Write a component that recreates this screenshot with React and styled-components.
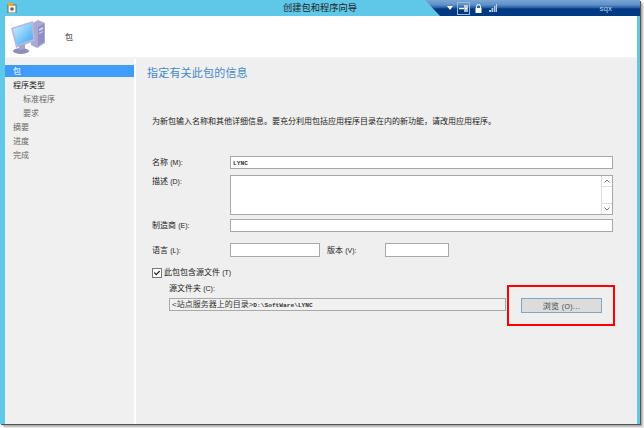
import React from "react"
import styled, { createGlobalStyle } from "styled-components"
import { FaCheck } from "react-icons/fa"

const Global = createGlobalStyle`
  html, body {
    margin: 0;
    padding: 0;
    background: #fff;
  }
  body {
    width: 644px;
    height: 428px;
    overflow: hidden;
    font-family: "Liberation Sans", "Noto Sans CJK SC", sans-serif;
    font-size: 8px;
    color: #444;
  }
`

const Frame = styled.div`
  width: 640px;
  height: 424px;
  display: flex;
  flex-direction: column;
  background: #5fc8e8;
  box-shadow: 1px 1px 0 #555, 3px 3px 2px #aaa;
`

const TitleBar = styled.div`
  height: 16px;
  flex: none;
  display: grid;
  grid-template-columns: 1fr auto 1fr;
  align-items: center;
`

const Title = styled.div`
  font-size: 9.25px;
  color: #222;
  line-height: 16px;
`

const AppIcon = styled.svg`
  width: 10px;
  height: 10px;
  display: block;
  margin-left: 7px;
`

const UserPanel = styled.div`
  justify-self: end;
  align-self: start;
  width: 215px;
  height: 16px;
  display: flex;
  align-items: center;
  padding: 0 28px 0 22px;
  box-sizing: border-box;
  background: linear-gradient(#7aa6d6 0, #5f90c8 30%, #2a5da3 48%, #003a84 55%, #003a84 100%);
  clip-path: polygon(0 0, 100% 0, 100% 100%, 15px 100%);
  color: #c0d4ea;
`

const Pin = styled.div`
  width: 11px;
  height: 11px;
  margin: 0 5px 0 4px;
  border: 1px solid #9db9d8;
  display: flex;
  align-items: center;
  justify-content: center;
`

const TrayIcon = styled.svg`
  display: block;
  flex: none;
  margin-left: ${(p) => p.$gap || 0}px;
`

const UserName = styled.span`
  margin-left: auto;
  font-size: 8px;
`

const Body = styled.div`
  flex: 1;
  display: flex;
  flex-direction: column;
  margin: 0 3px 0 5px;
  min-height: 0;
`

const Banner = styled.div`
  height: 41px;
  flex: none;
  background: #fff;
  display: flex;
  align-items: center;
  border-bottom: 2px solid #f3f3f3;
`

const BannerIcon = styled.svg`
  width: 36px;
  height: 36px;
  margin-left: 5px;
  flex: none;
`

const BannerText = styled.span`
  margin-left: 19px;
  font-size: 8px;
  color: #333;
`

const Main = styled.div`
  flex: 1;
  display: flex;
  min-height: 0;
`

const Sidebar = styled.nav`
  width: 129px;
  flex: none;
  background: #f0f0f0;
  padding-top: 6px;
  border-right: 2px solid #fff;
`

const NavItem = styled.div`
  line-height: 13px;
  font-size: 8px;
  padding-left: ${(p) => (p.$sub ? 18 : 8)}px;
  color: ${(p) => (p.$active ? "#fff" : p.$sub || p.$dim ? "#666" : "#222")};
  background: ${(p) => (p.$active ? "#3f9cf8" : "transparent")};
  height: ${(p) => (p.$active ? 12 : 14)}px;
  margin-bottom: ${(p) => (p.$active ? 2 : 0)}px;
`

const Content = styled.div`
  flex: 1;
  background: #efefef;
  padding: 7px 24px 0 11px;
  position: relative;
`

const Heading = styled.h1`
  margin: 0;
  font-size: 11px;
  font-weight: normal;
  line-height: 14px;
  color: #4488cc;
  letter-spacing: 0.2px;
`

const Intro = styled.p`
  margin: 36px 0 0 5px;
  font-size: 8px;
  line-height: 12px;
  color: #222;
`

const Form = styled.div`
  margin: 28px 0 0 5px;
  display: grid;
  grid-template-columns: 78px 1fr;
  row-gap: 4px;
`

const Label = styled.label`
  font-size: 8px;
  line-height: 13px;
  color: #222;
  white-space: nowrap;
`

// the access key in a label, smaller than the CJK text around it
const Key = styled.span`
  font-size: 7px;
`

const Field = styled.div`
  height: ${(p) => p.$h || 13}px;
  width: ${(p) => (p.$w ? `${p.$w}px` : "auto")};
  margin-bottom: ${(p) => p.$after || 0}px;
  box-sizing: border-box;
  background: ${(p) => (p.$muted ? "#f1f1f1" : "#fff")};
  border: 1px solid #a8a8a8;
  font-size: 8px;
  line-height: 11px;
  padding-left: 2px;
  color: #333;
  white-space: nowrap;
  overflow: hidden;
`

const Mono = styled.span`
  font-family: "Liberation Mono", monospace;
  font-size: 6.2px;
  font-weight: bold;
`

const TextArea = styled(Field)`
  display: flex;
  justify-content: flex-end;
  padding: 0;
`

const ScrollBar = styled.div`
  width: 10px;
  border-left: 1px solid #ddd;
  display: flex;
  flex-direction: column;
  justify-content: space-between;
  align-items: center;
`

const ScrollBtn = styled.div`
  width: 100%;
  height: 10px;
  display: flex;
  align-items: center;
  justify-content: center;
  border-bottom: ${(p) => (p.$down ? "none" : "1px solid #ddd")};
  border-top: ${(p) => (p.$down ? "1px solid #ddd" : "none")};
`

const LangRow = styled.div`
  display: flex;
  align-items: center;
  margin: 11px 0 0 5px;
`

const LangLabel = styled(Label)`
  width: 78px;
`

const VersionLabel = styled(Label)`
  margin-left: 7px;
  width: 58px;
`

const CheckRow = styled.div`
  display: flex;
  align-items: center;
  margin: 9px 0 0 5px;
  height: 13px;
`

const CheckBox = styled.div`
  width: 8px;
  height: 8px;
  margin-right: 2px;
  border: 1px solid #777;
  background: #fff;
  display: flex;
  align-items: center;
  justify-content: center;
  color: #222;
`

const SourceLabel = styled(Label)`
  display: block;
  margin: 3px 0 0 22px;
`

const SourceRow = styled.div`
  display: flex;
  align-items: flex-start;
  margin: 3px 0 0 22px;
`

const PathField = styled(Field)`
  flex: none;
`

const Browse = styled.button`
  margin-left: 15px;
  width: 81px;
  height: 15px;
  padding: 0;
  box-sizing: border-box;
  background: #dcdcdc;
  border: 1px solid #7fa6c4;
  font-family: inherit;
  font-size: 8px;
  color: #444;
  letter-spacing: 0.3px;
`

const Callout = styled.div`
  position: absolute;
  left: 371px;
  top: 226px;
  width: 108px;
  height: 41px;
  box-sizing: border-box;
  border: 2px solid #f00;
  pointer-events: none;
`

const steps = [
  { label: "包", active: true },
  { label: "程序类型" },
  { label: "标准程序", sub: true },
  { label: "要求", sub: true },
  { label: "摘要", dim: true },
  { label: "进度", dim: true },
  { label: "完成", dim: true },
]

const Computer = () => (
  <BannerIcon viewBox="0 0 36 36">
    <defs>
      <linearGradient id="screen" x1="0" y1="0" x2="1" y2="1">
        <stop offset="0" stopColor="#d4f2fe" />
        <stop offset="1" stopColor="#36a6f4" />
      </linearGradient>
    </defs>
    <path d="M21 5 L28 1 L35 4 V24 L27 29 L21 26 Z" fill="#a9a9d4" />
    <path d="M28 8 L34 5 V23 L28 27 Z" fill="#8f8fc4" />
    <path d="M29 10 L33 8 V10 L29 12 Z M29 14 L33 12 V13 L29 15 Z" fill="#d6d6ee" />
    <path d="M1 9 L23 2 L25 22 L6 29 Z" fill="#b5b9dc" />
    <path d="M3 10 L22 4 L23 20 L7 26 Z" fill="url(#screen)" />
    <ellipse cx="11" cy="32" rx="8" ry="3" fill="#8d8fba" />
    <path d="M9 27 L15 25 L15 30 L9 31 Z" fill="#a3a5cc" />
  </BannerIcon>
)

export default function App() {
  return (
    <>
      <Global />
      <Frame>
        <TitleBar>
          <AppIcon viewBox="0 0 10 10">
            <rect x="1" y="2" width="8" height="8" fill="#f7f3e3" stroke="#555" strokeWidth="0.8" />
            <rect x="1" y="0" width="5" height="3" fill="#f5a623" />
            <circle cx="5" cy="6" r="1.8" fill="#666" />
          </AppIcon>
          <Title>创建包和程序向导</Title>
          <UserPanel>
            <TrayIcon width="6" height="4" viewBox="0 0 6 4">
              <path d="M0 0 H6 L3 4 Z" fill="#fff" />
            </TrayIcon>
            <Pin>
              <TrayIcon width="9" height="7" viewBox="0 0 9 7">
                <path d="M0 3.5 H5 M6 0 V7 M8 0 V7 M6 3.5 H8" stroke="#fff" strokeWidth="1.3" fill="none" />
              </TrayIcon>
            </Pin>
            <TrayIcon width="7" height="9" viewBox="0 0 7 9">
              <path d="M1.5 4 V2.5 A2 2 0 0 1 5.5 2.5 V4" stroke="#fff" fill="none" />
              <rect x="0.5" y="4" width="6" height="5" fill="#fff" />
            </TrayIcon>
            <TrayIcon $gap={7} width="8" height="8" viewBox="0 0 8 8">
              <path d="M0 6 H2 V8 H0 Z M2.5 4 H4.3 V8 H2.5 Z M5 2 H6.5 V8 H5 Z M7 0 H8 V8 H7 Z" fill="#b9cfe0" />
            </TrayIcon>
            <UserName>sqx</UserName>
          </UserPanel>
        </TitleBar>
        <Body>
          <Banner>
            <Computer />
            <BannerText>包</BannerText>
          </Banner>
          <Main>
            <Sidebar>
              {steps.map((s) => (
                <NavItem key={s.label} $active={s.active} $sub={s.sub} $dim={s.dim}>
                  {s.label}
                </NavItem>
              ))}
            </Sidebar>
            <Content>
              <Heading>指定有关此包的信息</Heading>
              <Intro>为新包输入名称和其他详细信息。要充分利用包括应用程序目录在内的新功能，请改用应用程序。</Intro>
              <Form>
                <Label>名称 <Key>(M):</Key></Label>
                <Field $after={2}><Mono>LYNC</Mono></Field>
                <Label>描述 <Key>(D):</Key></Label>
                <TextArea $h={40}>
                  <ScrollBar>
                    <ScrollBtn>
                      <TrayIcon width="6" height="4" viewBox="0 0 6 4">
                        <path d="M0.5 3.5 L3 1 L5.5 3.5" stroke="#777" fill="none" />
                      </TrayIcon>
                    </ScrollBtn>
                    <ScrollBtn $down>
                      <TrayIcon width="6" height="4" viewBox="0 0 6 4">
                        <path d="M0.5 0.5 L3 3 L5.5 0.5" stroke="#777" fill="none" />
                      </TrayIcon>
                    </ScrollBtn>
                  </ScrollBar>
                </TextArea>
                <Label>制造商 <Key>(E):</Key></Label>
                <Field />
              </Form>
              <LangRow>
                <LangLabel>语言 <Key>(L):</Key></LangLabel>
                <Field $w={90} $h={14} />
                <VersionLabel>版本 <Key>(V):</Key></VersionLabel>
                <Field $w={64} $h={14} />
              </LangRow>
              <CheckRow>
                <CheckBox>
                  <FaCheck size={6} />
                </CheckBox>
                <Label>此包包含源文件 <Key>(T)</Key></Label>
              </CheckRow>
              <SourceLabel>源文件夹 <Key>(C):</Key></SourceLabel>
              <SourceRow>
                <PathField $w={337} $muted>&lt;站点服务器上的目录&gt;<Mono>D:\SoftWare\LYNC</Mono></PathField>
                <Browse>浏览 <Key>(O)</Key>...</Browse>
              </SourceRow>
              <Callout />
            </Content>
          </Main>
        </Body>
      </Frame>
    </>
  )
}
